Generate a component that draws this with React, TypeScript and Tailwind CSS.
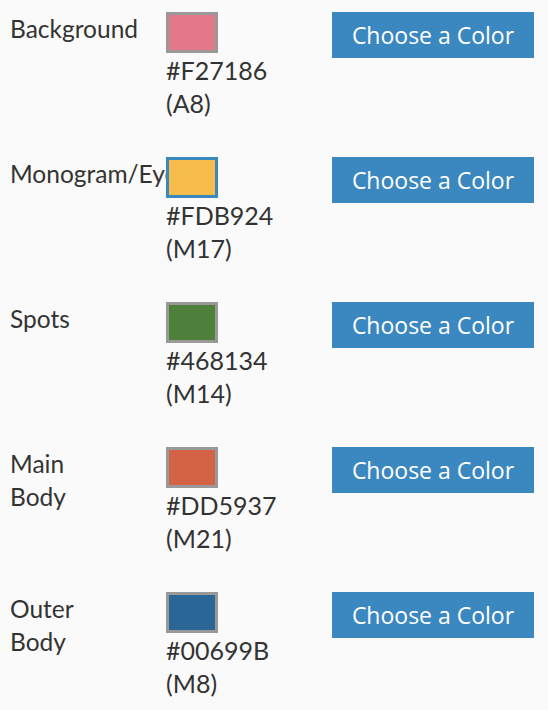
import React from "react";

const rows = [
  { label: "Background", color: "#e27889", hex: "#F27186", code: "(A8)", active: false },
  { label: "Monogram/Eyes", color: "#f5bb4b", hex: "#FDB924", code: "(M17)", active: true },
  { label: "Spots", color: "#4f803b", hex: "#468134", code: "(M14)", active: false },
  { label: "Main Body", color: "#d46244", hex: "#DD5937", code: "(M21)", active: false },
  { label: "Outer Body", color: "#2b6796", hex: "#00699B", code: "(M8)", active: false },
];

export default function App() {
  return (
    <div
      className="w-[548px] h-[710px] bg-[#fafafa] text-[#333] overflow-hidden pt-[12px]"
      style={{ fontFamily: "Lato, 'Open Sans', sans-serif" }}
    >
      {rows.map((r) => (
        <div key={r.label} className="flex h-[145px]">
          <div className="w-[166px] pl-[10px] shrink-0">
            <div className="w-[100px] text-[24.5px] leading-[33px]">
              {r.label === "Monogram/Eyes" ? (
                <span className="whitespace-nowrap">{r.label}</span>
              ) : (
                r.label
              )}
            </div>
          </div>
          <div className="w-[166px] shrink-0">
            <div
              className={`relative w-[52px] h-[41px] border-[3px] ${
                r.active ? "border-[#3b87c0]" : "border-[#999999]"
              }`}
              style={{ backgroundColor: r.color }}
            />
            <div className="mt-[1px] text-[25px] leading-[33px]">
              <div>{r.hex}</div>
              <div>{r.code}</div>
            </div>
          </div>
          <div>
            <button
              className="w-[202px] h-[46px] bg-[#3b87c0] text-white text-[23px] flex items-center justify-center"
              style={{ fontFamily: "'Open Sans', Lato, sans-serif" }}
            >
              Choose a Color
            </button>
          </div>
        </div>
      ))}
    </div>
  );
}
